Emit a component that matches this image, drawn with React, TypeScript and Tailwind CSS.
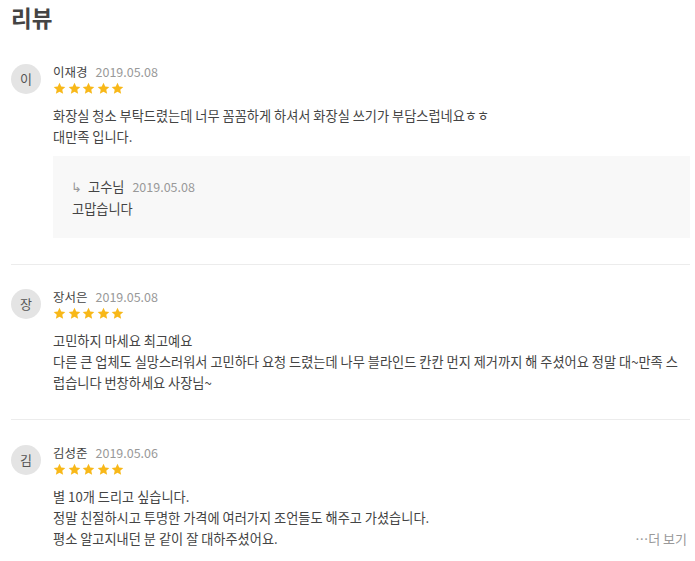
const font = { fontFamily: '"Noto Sans CJK KR", "Noto Sans", sans-serif' };

interface Reply { name: string; date: string; text: string }
interface Review { initial: string; name: string; date: string; lines: string[]; reply?: Reply; more?: boolean }

const reviews: Review[] = [
  {
    initial: '이',
    name: '이재경',
    date: '2019.05.08',
    lines: ['화장실 청소 부탁드렸는데 너무 꼼꼼하게 하셔서 화장실 쓰기가 부담스럽네요ㅎㅎ', '대만족 입니다.'],
    reply: { name: '고수님', date: '2019.05.08', text: '고맙습니다' },
  },
  {
    initial: '장',
    name: '장서은',
    date: '2019.05.08',
    lines: [
      '고민하지 마세요 최고예요',
      '다른 큰 업체도 실망스러워서 고민하다 요청 드렸는데 나무 블라인드 칸칸 먼지 제거까지 해 주셨어요 정말 대~만족 스럽습니다 번창하세요 사장님~',
    ],
  },
  {
    initial: '김',
    name: '김성준',
    date: '2019.05.06',
    lines: ['별 10개 드리고 싶습니다.', '정말 친절하시고 투명한 가격에 여러가지 조언들도 해주고 가셨습니다.', '평소 알고지내던 분 같이 잘 대하주셨어요.'],
    more: true,
  },
];

function Stars() {
  return (
    <div className="flex gap-[1.5px] h-[15px] items-center">
      {[0, 1, 2, 3, 4].map(i => (
        <svg key={i} width="13" height="13" viewBox="0 0 24 24">
          <path d="M12 1.5l3.2 7 7.5.8-5.6 5.1 1.6 7.5L12 18l-6.7 3.9 1.6-7.5L1.3 9.3l7.5-.8z" fill="#f8b819" />
        </svg>
      ))}
    </div>
  );
}

function ReviewItem({ r, last }: { r: Review; last: boolean }) {
  return (
    <div className={`flex gap-3 ${last ? 'pt-[24px]' : 'pt-[23px] pb-[26px] border-b border-[#ececec]'}`}>
      <div className="w-[30px] h-[30px] rounded-full bg-[#e4e4e4] text-[#555] text-[13px] flex items-center justify-center shrink-0 mt-[1px]">
        {r.initial}
      </div>
      <div className="flex-1 min-w-0">
        <div className="flex items-baseline gap-2 text-[12.5px] leading-[18px]">
          <span className="text-[#444]">{r.name}</span>
          <span className="text-[#999]">{r.date}</span>
        </div>
        <Stars />
        <div className="mt-[9px] flex items-end justify-between gap-4">
          <div className="text-[13.2px] leading-[21px] text-[#444] max-w-[632px] break-all">
            {r.lines.map((l, i) => <div key={i}>{l}</div>)}
          </div>
          {r.more && <span className="text-[13px] leading-[21px] text-[#999] whitespace-nowrap mr-[3px]">…더 보기</span>}
        </div>
        {r.reply && (
          <div className="mt-[9px] bg-[#f8f8f8] pl-[18px] pt-[20px] pb-[18px] text-[13.2px] leading-[22px]">
            <div className="flex items-baseline gap-2">
              <span className="text-[#999]">↳</span>
              <span className="text-[#444] -ml-[2px]">{r.reply.name}</span>
              <span className="text-[#999] text-[12.5px]">{r.reply.date}</span>
            </div>
            <div className="text-[#444] pl-[1px]">{r.reply.text}</div>
          </div>
        )}
      </div>
    </div>
  );
}

export default function App() {
  return (
    <div className="bg-white w-[695px] h-[561px] overflow-hidden pl-[11px] pr-[5px]" style={font}>
      <h2 className="text-[22.5px] font-bold leading-[32px] text-[#444] pt-[1px]">리뷰</h2>
      <div className="mt-[7px]">
        {reviews.map((r, i) => (
          <ReviewItem key={r.name} r={r} last={i === reviews.length - 1} />
        ))}
      </div>
    </div>
  );
}
